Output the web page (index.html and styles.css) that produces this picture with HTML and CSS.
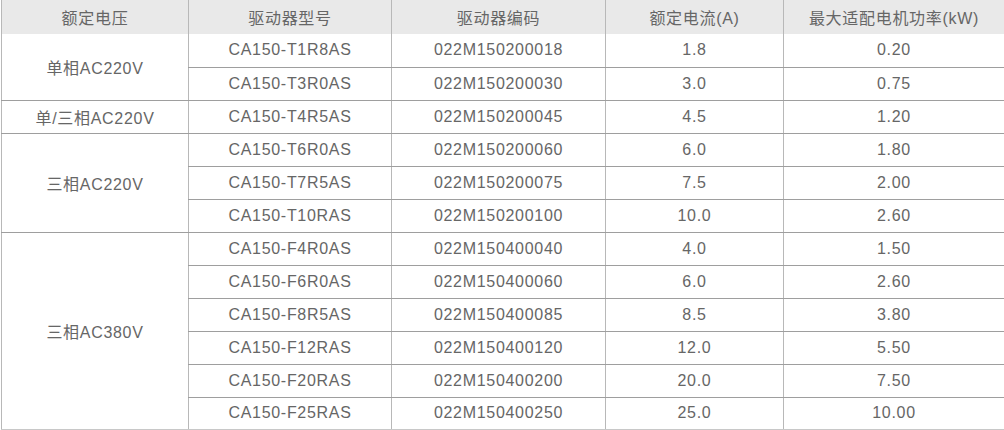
FILE: index.html
```html
<!DOCTYPE html>
<html lang="zh">
<head>
<meta charset="utf-8">
<title>驱动器规格</title>
<link rel="stylesheet" href="styles.css">
</head>
<body>
<table class="spec">
  <thead>
    <tr class="head-row">
      <th>额定电压</th>
      <th>驱动器型号</th>
      <th>驱动器编码</th>
      <th>额定电流(A)</th>
      <th>最大适配电机功率(kW)</th>
    </tr>
  </thead>
  <tbody>
    <tr><td class="group" rowspan="2">单相AC220V</td><td>CA150-T1R8AS</td><td>022M150200018</td><td>1.8</td><td>0.20</td></tr>
    <tr><td>CA150-T3R0AS</td><td>022M150200030</td><td>3.0</td><td>0.75</td></tr>
    <tr><td class="group">单/三相AC220V</td><td>CA150-T4R5AS</td><td>022M150200045</td><td>4.5</td><td>1.20</td></tr>
    <tr><td class="group" rowspan="3">三相AC220V</td><td>CA150-T6R0AS</td><td>022M150200060</td><td>6.0</td><td>1.80</td></tr>
    <tr><td>CA150-T7R5AS</td><td>022M150200075</td><td>7.5</td><td>2.00</td></tr>
    <tr><td>CA150-T10RAS</td><td>022M150200100</td><td>10.0</td><td>2.60</td></tr>
    <tr><td class="group" rowspan="6">三相AC380V</td><td>CA150-F4R0AS</td><td>022M150400040</td><td>4.0</td><td>1.50</td></tr>
    <tr><td>CA150-F6R0AS</td><td>022M150400060</td><td>6.0</td><td>2.60</td></tr>
    <tr><td>CA150-F8R5AS</td><td>022M150400085</td><td>8.5</td><td>3.80</td></tr>
    <tr><td>CA150-F12RAS</td><td>022M150400120</td><td>12.0</td><td>5.50</td></tr>
    <tr><td>CA150-F20RAS</td><td>022M150400200</td><td>20.0</td><td>7.50</td></tr>
    <tr class="last"><td>CA150-F25RAS</td><td>022M150400250</td><td>25.0</td><td>10.00</td></tr>
  </tbody>
</table>
</body>
</html>
```
FILE: styles.css
```css
html, body {
  margin: 0;
  padding: 0;
  background: #ffffff;
}

.spec {
  margin-left: 1px;
  width: 1003px;
  border-collapse: collapse;
  table-layout: fixed;
  font-family: "Liberation Sans", "Noto Sans CJK SC", sans-serif;
  font-size: 16px;
  color: #666666;
  letter-spacing: 0.7px;
}

.spec th,
.spec td {
  padding: 0;
  text-align: center;
  vertical-align: middle;
  font-weight: normal;
  border-left: 1px solid #b8b8b8;
}

.spec th:nth-child(1) { width: 186px; }
.spec th:nth-child(2) { width: 202px; }
.spec th:nth-child(3) { width: 213px; }
.spec th:nth-child(4) { width: 177px; }

.head-row {
  height: 34px;
  background: #e9e9e9;
}

.spec tbody tr {
  height: 33px;
}

.spec tbody td {
  border-bottom: 1px solid #9e9e9e;
}

.spec tbody tr.last td,
.spec tbody td[rowspan="6"] {
  border-bottom: 2px solid #c8c8c8;
}
```
